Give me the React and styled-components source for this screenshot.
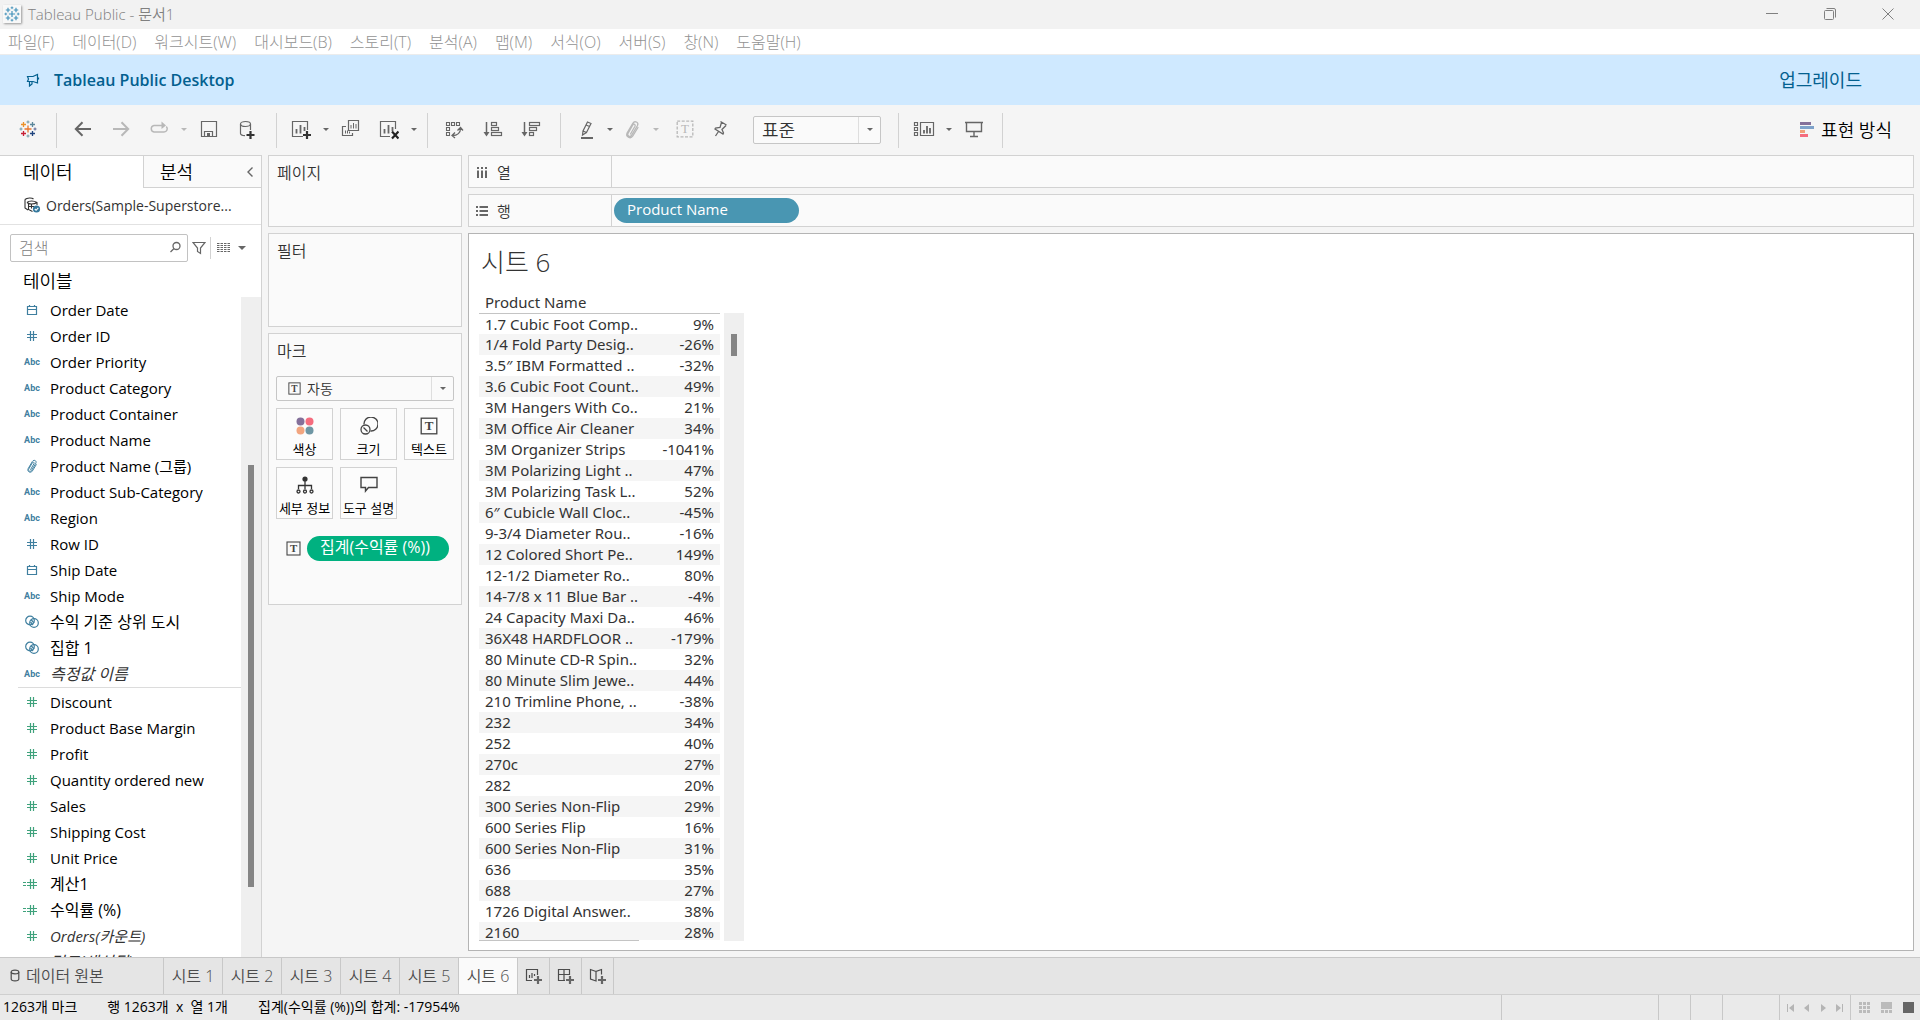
import React from "react";
import styled, { createGlobalStyle, css } from "styled-components";

const c = {
  line: "#d2d2d2",
  strong: "#b4b4b4",
  shell: "#f5f5f5",
  card: "#fafafa",
  icon: "#666666",
  faint: "#b8b8b8",
  dim: "#3f7f9f",
  measure: "#3fa27c",
};

const Global = createGlobalStyle`
  *, *::before, *::after { box-sizing: border-box; }
  body {
    margin: 0;
    font-family: "Open Sans", "Noto Sans CJK KR", sans-serif;
    font-size: 15px;
    color: #000;
    background: ${c.shell};
  }
  button, input, select { font: inherit; color: inherit; margin: 0; }
  button { background: none; border: 0; padding: 0; }
  svg { display: block; flex: none; }
  h1, h2, ul { margin: 0; padding: 0; font-weight: 400; list-style: none; }
`;

/* ---------- shell ---------- */

const Shell = styled.div`
  display: flex;
  flex-direction: column;
  height: 100vh;
  min-width: 1100px;
`;

const TitleBar = styled.header`
  display: flex;
  align-items: center;
  height: 29px;
  padding: 0 0 2px 3px;
  background: #f2f2f2;
  color: #808080;
  font-size: 15px;
  font-weight: 350;
  line-height: 20px;
  flex: none;
`;

const AppBadge = styled.span`
  display: grid;
  place-items: center;
  width: 18px;
  height: 18px;
  margin-right: 7px;
  background: #f8f8f8;
  box-shadow: 1px 1px 2px #999;
`;

const WindowButtons = styled.div`
  display: flex;
  margin-left: auto;
  padding-right: 3px;
`;

const WindowButton = styled.button`
  display: grid;
  place-items: center;
  width: 58px;
  height: 27px;
`;

const MenuBar = styled.nav`
  display: flex;
  gap: 18px;
  align-items: center;
  height: 26px;
  padding-left: 8px;
  background: #fff;
  border-bottom: 1px solid #ececec;
  color: #929292;
  font-size: 16px;
  font-weight: 300;
  line-height: 20px;
  flex: none;
  white-space: nowrap;
`;

const Banner = styled.section`
  display: flex;
  align-items: center;
  height: 50px;
  padding: 0 58px 0 26px;
  background: #cfe9ff;
  color: #03608f;
  flex: none;
`;

const BannerText = styled.span`
  margin-left: 14px;
  font-size: 16px;
  font-weight: 600;
`;

const UpgradeLink = styled.a`
  margin-left: auto;
  color: inherit;
  font-size: 18px;
  line-height: 24px;
  text-decoration: none;
`;

/* ---------- toolbar ---------- */

const Toolbar = styled.div`
  display: flex;
  align-items: center;
  height: 50px;
  padding-right: 28px;
  flex: none;
`;

const ToolGroup = styled.div`
  display: flex;
  align-items: center;
  height: 35px;
  padding: 0 ${(p) => p.$end}px 0 ${(p) => p.$start}px;
  border-right: 1px solid ${c.line};
`;

const ToolButton = styled.button`
  display: flex;
  justify-content: center;
  width: ${(p) => p.$w || 38}px;
  height: 20px;
  color: ${(p) => (p.$off ? c.faint : c.icon)};
`;

const ShowMe = styled.button`
  display: flex;
  align-items: center;
  gap: 7px;
  margin-left: auto;
  font-size: 18px;
  font-weight: 350;
  line-height: 24px;
`;

const Combo = styled.div`
  position: relative;
  width: ${(p) => p.$w};
  height: ${(p) => p.$h}px;
  margin: ${(p) => p.$margin || 0};
  color: #333;
`;

const ComboSelect = styled.select`
  appearance: none;
  width: 100%;
  height: 100%;
  padding: 0 24px 0 ${(p) => p.$pad}px;
  background: ${c.card};
  border: 1px solid #c6c6c6;
  border-radius: 2px;
  font-size: ${(p) => p.$size}px;
  font-weight: 350;
  line-height: 22px;
`;

const ComboArrow = styled.span`
  position: absolute;
  top: 1px;
  bottom: 1px;
  right: 1px;
  width: 22px;
  display: grid;
  place-items: center;
  border-left: 1px solid #dedede;
  color: ${c.icon};
  pointer-events: none;
`;

const ComboIcon = styled.span`
  position: absolute;
  left: 12px;
  top: 6px;
  pointer-events: none;
`;

/* ---------- workspace ---------- */

const Workspace = styled.main`
  display: flex;
  gap: 6px;
  flex: 1;
  min-height: 0;
`;

const DataPane = styled.aside`
  display: flex;
  flex-direction: column;
  width: 262px;
  flex: none;
  background: #fff;
  border-top: 1px solid ${c.line};
  border-right: 1px solid ${c.line};
`;

const PaneTabs = styled.div`
  display: flex;
  height: 32px;
  flex: none;
`;

const PaneTab = styled.button`
  flex: ${(p) => (p.$on ? "0 0 143px" : "1")};
  padding-left: ${(p) => (p.$on ? 23 : 16)}px;
  text-align: left;
  font-size: 18px;
  font-weight: 350;
  line-height: 24px;
  ${(p) =>
    !p.$on &&
    css`
      background: ${c.card};
      border-left: 1px solid ${c.line};
      border-bottom: 1px solid ${c.line};
    `}
`;

const CollapseButton = styled.button`
  display: grid;
  place-items: center;
  width: 22px;
  background: ${c.card};
  border-bottom: 1px solid ${c.line};
`;

const SourceRow = styled.button`
  display: flex;
  align-items: center;
  gap: 5px;
  height: 37px;
  padding: 0 0 2px 24px;
  border-bottom: 1px solid #e2e2e2;
  color: #333;
  font-size: 14px;
  flex: none;
`;

const SearchRow = styled.div`
  display: flex;
  align-items: center;
  gap: 4px;
  height: 28px;
  margin: 9px 0 0 10px;
  flex: none;
  color: ${c.icon};
`;

const SearchBox = styled.label`
  position: relative;
  width: 178px;
  height: 28px;
`;

const SearchInput = styled.input`
  width: 100%;
  height: 100%;
  padding: 0 28px 0 8px;
  border: 1px solid #c2c2c2;
  border-radius: 2px;
  font-size: 16px;
  font-weight: 300;
  &::placeholder { color: #808080; opacity: 1; }
`;

const SearchGlyph = styled.span`
  position: absolute;
  right: 5px;
  top: 7px;
`;

const ViewMenu = styled.button`
  display: flex;
  align-items: center;
  gap: 8px;
  height: 22px;
  padding-left: 6px;
  border-left: 1px solid ${c.line};
`;

const TablesTitle = styled.h2`
  height: 35px;
  padding: 6px 0 0 23px;
  font-size: 18px;
  font-weight: 350;
  line-height: 26px;
  flex: none;
`;

const FieldArea = styled.div`
  display: flex;
  flex: 1;
  min-height: 0;
`;

const FieldList = styled.ul`
  flex: 1;
  overflow: hidden;
`;

const Field = styled.li`
  display: flex;
  align-items: center;
  height: 26px;
  padding-left: 22px;
  font-style: ${(p) => (p.$italic ? "italic" : "normal")};
  color: ${(p) => (p.$italic ? "#333" : "#000")};
  white-space: nowrap;
`;

const FieldGlyph = styled.span`
  display: grid;
  place-items: center;
  width: 20px;
  margin-right: 8px;
  color: ${(p) => p.$color};
  font: 700 9px/12px Roboto, sans-serif;
`;

const FieldName = styled.span`
  line-height: 22px;
  &:lang(ko) { font-size: 16px; }
`;

const FieldRule = styled.li`
  height: 2px;
  margin-left: 18px;
  border-top: 1px solid #dcdcdc;
`;

const ScrollTrack = styled.div`
  width: 20px;
  padding: ${(p) => p.$top}px 0 ${(p) => p.$bottom || 0}px 7px;
  background: #efefef;
`;

const ScrollThumb = styled.div`
  width: 6px;
  height: ${(p) => p.$h};
  background: #858585;
`;

/* ---------- cards ---------- */

const Cards = styled.div`
  display: flex;
  flex-direction: column;
  gap: 6px;
  width: 194px;
  flex: none;
`;

const Card = styled.section`
  min-height: ${(p) => p.$h}px;
  padding: 6px 7px;
  background: ${c.card};
  border: 1px solid ${c.line};
`;

const CardTitle = styled.h2`
  padding-left: 1px;
  color: #333;
  font-size: 16px;
  font-weight: 350;
  line-height: 22px;
`;

const MarkGrid = styled.div`
  display: grid;
  grid-template-columns: 57fr 57fr 50fr;
  gap: 7px;
  margin-top: 7px;
`;

const MarkButton = styled.button`
  display: flex;
  flex-direction: column;
  align-items: center;
  justify-content: space-between;
  height: 52px;
  padding: 8px 0 1px;
  background: #fcfcfc;
  border: 1px solid ${c.line};
  font-size: 13px;
  line-height: 18px;
  white-space: nowrap;
`;

const MarkPillRow = styled.div`
  display: flex;
  align-items: center;
  gap: 6px;
  margin: 17px 5px 0 10px;
`;

const Pill = styled.button`
  width: ${(p) => p.$w};
  height: 25px;
  padding: 0 13px 3px;
  border-radius: 13px;
  background: ${(p) => p.$bg};
  color: #fff;
  text-align: left;
  font-size: ${(p) => p.$size}px;
  line-height: 22px;
  white-space: nowrap;
`;

/* ---------- shelves and view ---------- */

const ViewColumn = styled.div`
  display: flex;
  flex-direction: column;
  gap: 6px;
  flex: 1;
  min-width: 0;
  padding: 0 6px 6px 0;
`;

const Shelf = styled.section`
  display: flex;
  height: 33px;
  background: ${c.card};
  border: 1px solid ${c.line};
  flex: none;
`;

const ShelfLabel = styled.h2`
  display: flex;
  align-items: center;
  gap: 9px;
  width: 143px;
  padding-left: 7px;
  border-right: 1px solid ${c.line};
  color: #333;
  font-size: 15px;
  font-weight: 350;
  line-height: 22px;
`;

const ShelfDrop = styled.div`
  display: flex;
  align-items: center;
  flex: 1;
  padding-left: 2px;
`;

const Sheet = styled.section`
  display: flex;
  flex-direction: column;
  flex: 1;
  min-height: 0;
  padding: 10px 10px 9px;
  background: #fff;
  border: 1px solid ${c.strong};
`;

const SheetTitle = styled.h1`
  padding-left: 2px;
  color: #333;
  font-size: 26px;
  font-weight: 300;
  line-height: 36px;
  flex: none;
`;

const Crosstab = styled.div`
  display: flex;
  gap: 4px;
  flex: 1;
  min-height: 0;
  margin-top: 10px;
`;

const TableFrame = styled.div`
  display: flex;
  flex-direction: column;
  width: 241px;
`;

const TableClip = styled.div`
  flex: 1;
  min-height: 0;
  overflow: hidden;
`;

const FrameRule = styled.div`
  width: 160px;
  height: 1px;
  background: #c4c4c4;
`;

const Table = styled.table`
  width: 100%;
  table-layout: fixed;
  border-collapse: separate;
  border-spacing: 0;
  color: #333;
  font-family: "Noto Sans", sans-serif;
  font-size: 15px;
  line-height: 20px;
  white-space: nowrap;

  th, td { padding: 0 6px 1px; height: 21px; text-align: left; font-weight: 400; }
  thead th { height: 23px; padding-bottom: 0; }
  tbody th { width: 160px; }
  tbody td { text-align: right; }
  tbody tr:nth-child(even) > * { background: #f5f5f5; }
  tbody tr:first-child > * { padding-bottom: 0; border-top: 1px solid #c4c4c4; }
`;

const TableScroll = styled(ScrollTrack)`
  margin-top: 23px;
`;

/* ---------- bottom ---------- */

const SheetTabs = styled.nav`
  display: flex;
  height: 37px;
  background: #e5e5e5;
  border-top: 1px solid #c8c8c8;
  flex: none;
`;

const SheetTab = styled.button`
  display: flex;
  align-items: center;
  justify-content: ${(p) => (p.$start ? "flex-start" : "center")};
  gap: 6px;
  width: ${(p) => p.$w || 59}px;
  padding: 0 0 1px ${(p) => (p.$start ? 10 : 0)}px;
  background: ${(p) => (p.$on ? c.card : "transparent")};
  border-right: 1px solid #c8c8c8;
  color: #4c4c4c;
  font-size: 16px;
  font-weight: 350;
  line-height: 22px;
  white-space: nowrap;
`;

const StatusBar = styled.footer`
  display: flex;
  height: 26px;
  padding-left: 3px;
  background: #eaeaea;
  border-top: 1px solid #cfcfcf;
  font-size: 14px;
  line-height: 24px;
  flex: none;
  white-space: nowrap;
`;

const StatusText = styled.span`
  margin-right: 30px;
`;

const StatusCells = styled.div`
  display: flex;
  margin-left: auto;
`;

const StatusCell = styled.div`
  display: flex;
  align-items: center;
  justify-content: space-between;
  width: ${(p) => p.$w}px;
  padding: 0 ${(p) => p.$pr || 0}px 0 ${(p) => p.$pl || 0}px;
  border-left: 1px solid #c8c8c8;
`;

/* ---------- icons ---------- */

const Svg = ({ w = 20, h = w, children, ...rest }) => (
  <svg width={w} height={h} viewBox={`0 0 ${w} ${h}`} fill="none" stroke="currentColor" aria-hidden="true" {...rest}>
    {children}
  </svg>
);

const logoMarks = [
  [9, 9, 3.5, "#e8762c"],
  [4.5, 4.5, 2.5, "#eb9129"],
  [13.5, 4.5, 2.5, "#5b879b"],
  [4.5, 13.5, 2.5, "#c72035"],
  [13.5, 13.5, 2.5, "#1f447e"],
  [9, 2, 1.5, "#7199a6"],
  [9, 16, 1.5, "#7199a6"],
  [2, 9, 1.5, "#7199a6"],
  [16, 9, 1.5, "#5c6692"],
];

const Logo = ({ mono, size = 18 }) => (
  <svg width={size} height={size} viewBox="0 0 18 18" fill="none" aria-hidden="true">
    {logoMarks.map(([x, y, r, color]) => (
      <path
        key={`${x}-${y}`}
        d={`M${x - r} ${y}H${x + r}M${x} ${y - r}V${y + r}`}
        stroke={mono ? "#3f8fb8" : color}
        strokeWidth={r > 2 ? 1.3 : 1}
      />
    ))}
  </svg>
);

const Caret = ({ w = 6 }) => (
  <svg width={w} height="20" viewBox={`0 0 ${w} 20`} fill="currentColor" aria-hidden="true">
    <path d={`M0 8H${w}L${w / 2} ${8 + w / 2}z`} />
  </svg>
);

const Plus = ({ x, y, color = "#333" }) => (
  <path d={`M${x - 4} ${y}h8M${x} ${y - 4}v8`} stroke={color} strokeWidth="2.2" />
);

const Back = () => <Svg strokeWidth="2"><path d="M18 9H3M9.5 2.2 2.8 9l6.7 6.8" /></Svg>;
const Forward = () => <Svg strokeWidth="2"><path d="M2 9h15M10.5 2.2 17.2 9l-6.700 6.800" /></Svg>;
const Replay = () => (
  <Svg strokeWidth="1.5">
    <path d="M13 5.500H5A3.300 3.300 0 0 0 5 12h10a3.300 3.300 0 0 0 2.300-5.600" />
    <path d="M12.500 1.500 17 5.500l-4.500 3.500z" fill="currentColor" stroke="none" />
  </Svg>
);
const Save = () => (
  <Svg>
    <path d="M2.500 1.500h15v15h-15zM5.500 16.500v-5h8v5" strokeWidth="1.200" />
    <path d="M8 13h3v3H8z" fill="currentColor" stroke="none" />
  </Svg>
);
const AddData = () => (
  <Svg strokeWidth="1.200">
    <ellipse cx="8.500" cy="4" rx="5" ry="2.500" />
    <path d="M3.500 4v9.500c0 1 2 2 4.500 2.200M13.500 4v6" />
    <Plus x={13.5} y={15} />
  </Svg>
);
const chartBars = <path d="M5.500 9v4.500M9.500 5v8.500M13.500 7v4" strokeWidth="1.800" />;
const NewSheet = () => (
  <Svg>
    <path d="M16.500 10V1.500h-15v15H12" strokeWidth="1.200" />
    {chartBars}
    <Plus x={16} y={15} />
  </Svg>
);
const ClearSheet = () => (
  <Svg>
    <path d="M16.500 9V1.500h-15v15H11" strokeWidth="1.200" />
    {chartBars}
    <path d="m13 11.500 6.500 7m0-7-6.500 7" stroke="#222" strokeWidth="2.200" />
  </Svg>
);
const Duplicate = () => (
  <Svg>
    <path d="M7.500.5h10v10h-10zM5 6.500H1.500v9h10V13" strokeWidth="1.200" />
    <path d="M10 5v3.500M12.500 3v5.500M15 4v4.500M4.500 10.500v3M6.500 10.500v3M8.500 11.500v2" />
  </Svg>
);
const Swap = () => (
  <Svg strokeWidth="1.100">
    <path d="M1.500 2.500h3v3h-3zM6.500 2.500h3v3h-3zM11.500 2.500h3v3h-3zM1.500 7.500h3v3h-3zM1.500 12.500h3v3h-3z" />
    <path d="M15.500 8.500c0 4-3 7-8 7M12.500 10.500l3-3 2.500 3M10 12.500l-3 3 3 2.500" strokeWidth="1.300" />
  </Svg>
);
const SortIcon = ({ widths }) => (
  <Svg strokeWidth="1.200">
    <path d="M3.500 2v12" strokeWidth="1.500" />
    <path d="M.5 12h6l-3 4.500z" fill="currentColor" stroke="none" />
    {widths.map((w, i) => (
      <rect key={w} x="8.500" y={2.5 + i * 5} width={w} height="3" />
    ))}
  </Svg>
);
const Pencil = () => (
  <Svg strokeWidth="1.200">
    <path d="m9.500 2 3.500 1.500-4.500 9L5 11zM8 5l3.500 1.500M5 11l-.5 4 4-2.500" />
    <path d="M3 18h12" strokeWidth="2" />
  </Svg>
);
const Clip = ({ size = 20 }) => (
  <svg width={size} height={size} viewBox="0 0 20 20" fill="none" stroke="currentColor" strokeWidth="1.300" strokeLinecap="round" aria-hidden="true">
    <path d="M7.500 14 12 6.200c.9-1.700-1.300-2.900-2.200-1.200L5 13.300c-1.300 2.700 2.200 4.400 3.700 1.900L14.500 5.500c1.500-3.200-2.800-5.300-4.700-2.200L4.200 12.800c-2 4.200 3.500 6.600 5.600 3.200L15 7.500" />
  </svg>
);
const TextMark = ({ size = 18, dashed, color = "#444" }) => (
  <svg width={size} height={size} viewBox="0 0 18 18" fill="none" aria-hidden="true">
    <rect x="1.200" y="1.200" width="15.600" height="15.600" stroke={dashed ? c.faint : color} strokeWidth="1.300" strokeDasharray={dashed ? "3 1.500" : undefined} />
    <text x="9" y="13.300" textAnchor="middle" fontFamily="Liberation Serif, serif" fontSize="13" fontWeight={dashed ? 400 : 700} fill={dashed ? c.faint : color}>T</text>
  </svg>
);
const Pin = () => (
  <Svg strokeWidth="1.300">
    <path d="m9.500 1.500 6 3.500M10.500 2.500 9 7.500l-4.500.5-.5 1 8 5 .5-1L11 9.500l4-4M7.500 11.500 4.500 16" />
  </Svg>
);
const ShowCards = () => (
  <Svg w={22} h={20} strokeWidth="1.200">
    <path d="M1.500 2.500h3v3h-3zM1.500 7.500h3v3h-3zM1.500 12.500h3v3h-3zM7.500 2.500h13v13h-13z" />
    <path d="M11 10v3.500M14 6v7.500M17 8v5.500" strokeWidth="1.800" />
  </Svg>
);
const Present = () => (
  <Svg strokeWidth="1.400">
    <path d="M1 2.500h18M2.500 3v8.500h15V3M10 11.500v5M6 16.500h8" />
  </Svg>
);
const ShowMeIcon = () => (
  <Svg w={15} h={18} stroke="none">
    <path d="M1 1h11v3H1z" fill="#84709a" />
    <path d="M1 5h14v3H1z" fill="#7ea2ca" />
    <path d="M1 9h5v3H1z" fill="#f0a078" />
    <path d="M1 13h8v3H1z" fill="#f56c7e" />
  </Svg>
);
const Horn = () => (
  <Svg w={14} strokeWidth="1.200">
    <path d="M1.500 3.500H7l4.500-2v8.500L7 8.500H1.500l1-2.500zM3.500 8.500v4.500l2.500-2V8.500M12.500 4.500v2" />
  </Svg>
);
const Source = () => (
  <Svg w={17} h={16} strokeWidth="1.100">
    <path d="M1 2.500C3 .5 8 .5 9.500 2M1 2.500v8.500l3 2M3 5.500c2-2 7-2 10 0v2.500M3 5.500c2 2 7 2 10 0M4.500 7v5.500l4 2M5 9.500h5M7.500 7.500v4" />
    <circle cx="12.500" cy="12" r="3.600" fill="#34789c" stroke="none" />
    <path d="m10.800 12 1.300 1.300 2.200-2.500" stroke="#fff" />
  </Svg>
);
const Magnifier = () => <Svg w={14} strokeWidth="1.300"><circle cx="7.500" cy="5" r="3.500" /><path d="M5 7.500 1.500 11" /></Svg>;
const Funnel = () => <Svg w={14} strokeWidth="1.200"><path d="M1 1.500h12L8.500 7v5.500l-3-2V7z" /></Svg>;
const ListView = () => (
  <Svg w={13} h={10} strokeWidth="1">
    <path d="M0 .5h13M0 2.500h13M0 4.500h13M0 6.500h13M0 8.500h13" strokeDasharray="2.500 1" />
  </Svg>
);
const Calendar = () => <Svg w={12} strokeWidth="1.200"><path d="M1.500 2.500h9v8h-9zM1.500 5.500h9M3.500 1v2M8.500 1v2" /></Svg>;
const Hash = ({ calc }) => (
  <Svg w={20} h={12} strokeWidth="1.200">
    <path d="M5 4.500h10M5 7.500h10M8.500 1v10M11.500 1v10" />
    {calc && <path d="M1 4.500h3M1 7.500h3" />}
  </Svg>
);
const Rings = () => (
  <Svg w={14} strokeWidth="1.200">
    <circle cx="5" cy="5.500" r="4.300" />
    <circle cx="9" cy="8" r="4.300" />
    <path d="m6 4.500 3 3.500M5.500 7 8 10" />
  </Svg>
);
const ColorDots = () => (
  <Svg w={18} stroke="none">
    <circle cx="4.500" cy="4.500" r="4" fill="#84709a" />
    <circle cx="13.500" cy="4.500" r="4" fill="#f56c7e" />
    <circle cx="4.500" cy="13.500" r="4" fill="#f2a57f" />
    <circle cx="13.500" cy="13.500" r="4" fill="#6e96a4" />
  </Svg>
);
const SizeIcon = () => (
  <Svg w={18} stroke="#444" strokeWidth="1.300">
    <path d="M4 7.500a7 7 0 1 1 6.500 6.500" />
    <circle cx="5.500" cy="12.500" r="4.500" />
    <path d="m3.500 10.500 4 4" />
  </Svg>
);
const DetailIcon = () => (
  <Svg w={18} stroke="#333" strokeWidth="1.300">
    <circle cx="9" cy="3" r="2.600" fill="#333" stroke="none" />
    <path d="M9 5v8M2.500 13V9.500h13V13" />
    <circle cx="2.500" cy="15.500" r="1.500" /><circle cx="9" cy="15.500" r="1.500" /><circle cx="15.500" cy="15.500" r="1.500" />
  </Svg>
);
const TooltipIcon = () => <Svg w={18} stroke="#444" strokeWidth="1.400"><path d="M1 1.500h16v10H8.500l-3 3.500v-3.500H1z" /></Svg>;
const ColumnsIcon = () => <Svg w={12} strokeWidth="2"><path d="M2 4.500V12M6 4.500V12M10 4.500V12M2 1v2M6 1v2M10 1v2" stroke={c.icon} /></Svg>;
const RowsIcon = () => <Svg w={12} strokeWidth="2"><path d="M3.500 2H12M3.500 6H12M3.500 10H12M0 2h2M0 6h2M0 10h2" stroke={c.icon} /></Svg>;
const Cylinder = () => <Svg w={10} h={13} strokeWidth="1.200"><ellipse cx="5" cy="3" rx="3.800" ry="1.900" /><path d="M1.200 3v7c0 2.500 7.600 2.500 7.600 0V3" /></Svg>;
const AddSheet = () => <Svg w={17}><path d="M12.500 8V2.500h-11v11H7" strokeWidth="1.200" /><path d="M4.500 8v3M7 6v5M9.500 7v2" strokeWidth="1.200" /><Plus x={13} y={13} color="#666" /></Svg>;
const AddDashboard = () => <Svg w={17}><path d="M12.500 8V2.500h-11v11H8M1.500 7.500h11M7 2.500v11" strokeWidth="1.200" /><Plus x={13} y={13} color="#666" /></Svg>;
const AddStory = () => <Svg w={17}><path d="M7 4.500 1.500 2.500v9.500L7 14V4.500l5.500-2v5" strokeWidth="1.200" /><Plus x={13} y={13} color="#666" /></Svg>;

const PageNav = ({ d, bar }) => (
  <Svg w={8} h={8} stroke="none"><path d={d} fill="#b5b5b5" />{bar !== undefined && <path d={`M${bar} 0v8`} stroke="#b5b5b5" />}</Svg>
);
const GridIcon = () => (
  <Svg w={11} stroke="none"><path d="M0 0h3v3H0zM4 0h3v3H4zM8 0h3v3H8zM0 4h3v3H0zM4 4h3v3H4zM8 4h3v3H8zM0 8h3v3H0zM4 8h3v3H4zM8 8h3v3H8z" fill="#bbb" /></Svg>
);
const StripIcon = () => <Svg w={11} stroke="none"><path d="M0 0h11v7H0zM0 8h3v3H0zM4 8h3v3H4zM8 8h3v3H8z" fill="#bbb" /></Svg>;
const FullIcon = () => <Svg w={11} stroke="none"><path d="M0 0h11v11H0z" fill="#666" /></Svg>;

/* ---------- data ---------- */

const menus = ["파일(F)", "데이터(D)", "워크시트(W)", "대시보드(B)", "스토리(T)", "분석(A)", "맵(M)", "서식(O)", "서버(S)", "창(N)", "도움말(H)"];

const glyphs = {
  date: <Calendar />,
  number: <Hash />,
  calc: <Hash calc />,
  text: "Abc",
  group: <Clip size={15} />,
  set: <Rings />,
};

const dimensions = [
  ["date", "Order Date"],
  ["number", "Order ID"],
  ["text", "Order Priority"],
  ["text", "Product Category"],
  ["text", "Product Container"],
  ["text", "Product Name"],
  ["group", "Product Name (그룹)"],
  ["text", "Product Sub-Category"],
  ["text", "Region"],
  ["number", "Row ID"],
  ["date", "Ship Date"],
  ["text", "Ship Mode"],
  ["set", "수익 기준 상위 도시", "ko"],
  ["set", "집합 1", "ko"],
  ["text", "측정값 이름", "ko", true],
];

const measures = [
  ["number", "Discount"],
  ["number", "Product Base Margin"],
  ["number", "Profit"],
  ["number", "Quantity ordered new"],
  ["number", "Sales"],
  ["number", "Shipping Cost"],
  ["number", "Unit Price"],
  ["calc", "계산1", "ko"],
  ["calc", "수익률 (%)", "ko"],
  ["number", "Orders(카운트)", "en", true],
  ["number", "경도(생성됨)", "ko", true],
];

const rows = [
  ["1.7 Cubic Foot Comp..", "9%"],
  ["1/4 Fold Party Desig..", "-26%"],
  ["3.5″ IBM Formatted ..", "-32%"],
  ["3.6 Cubic Foot Count..", "49%"],
  ["3M Hangers With Co..", "21%"],
  ["3M Office Air Cleaner", "34%"],
  ["3M Organizer Strips", "-1041%"],
  ["3M Polarizing Light ..", "47%"],
  ["3M Polarizing Task L..", "52%"],
  ["6″ Cubicle Wall Cloc..", "-45%"],
  ["9-3/4 Diameter Rou..", "-16%"],
  ["12 Colored Short Pe..", "149%"],
  ["12-1/2 Diameter Ro..", "80%"],
  ["14-7/8 x 11 Blue Bar ..", "-4%"],
  ["24 Capacity Maxi Da..", "46%"],
  ["36X48 HARDFLOOR ..", "-179%"],
  ["80 Minute CD-R Spin..", "32%"],
  ["80 Minute Slim Jewe..", "44%"],
  ["210 Trimline Phone, ..", "-38%"],
  ["232", "34%"],
  ["252", "40%"],
  ["270c", "27%"],
  ["282", "20%"],
  ["300 Series Non-Flip", "29%"],
  ["600 Series Flip", "16%"],
  ["600 Series Non-Flip", "31%"],
  ["636", "35%"],
  ["688", "27%"],
  ["1726 Digital Answer..", "38%"],
  ["2160", "28%"],
];

const FieldItem = ({ kind, name, lang = "en", italic, color }) => (
  <Field $italic={italic}>
    <FieldGlyph $color={color}>{glyphs[kind]}</FieldGlyph>
    <FieldName lang={lang}>{name}</FieldName>
  </Field>
);

const Tool = ({ label, w, off, children }) => (
  <ToolButton type="button" aria-label={label} $w={w} $off={off}>{children}</ToolButton>
);

const DropCaret = ({ label, off }) => (
  <Tool label={label} w={12} off={off}><Caret /></Tool>
);

export default function App() {
  return (
    <Shell lang="ko">
      <Global />
      <TitleBar>
        <AppBadge><Logo mono size={16} /></AppBadge>
        <span>Tableau Public - 문서1</span>
        <WindowButtons>
          <WindowButton type="button" aria-label="최소화"><Svg w={12}><path d="M0 5.500h12" /></Svg></WindowButton>
          <WindowButton type="button" aria-label="이전 크기로"><Svg w={12}><rect x=".5" y="2.500" width="9" height="9" rx="1" /><path d="M2.500.5H10a1.500 1.500 0 0 1 1.500 1.500v7.500" /></Svg></WindowButton>
          <WindowButton type="button" aria-label="닫기"><Svg w={12}><path d="m.5.5 11 11m0-11-11 11" /></Svg></WindowButton>
        </WindowButtons>
      </TitleBar>

      <MenuBar aria-label="메뉴">
        {menus.map((m) => <button type="button" key={m}>{m}</button>)}
      </MenuBar>

      <Banner>
        <Horn />
        <BannerText>Tableau Public Desktop</BannerText>
        <UpgradeLink href="#upgrade">업그레이드</UpgradeLink>
      </Banner>

      <Toolbar role="toolbar">
        <ToolGroup $start={9} $end={9}><Tool label="시작 페이지"><Logo /></Tool></ToolGroup>
        <ToolGroup $start={7} $end={10}>
          <Tool label="실행 취소"><Back /></Tool>
          <Tool label="다시 실행" off><Forward /></Tool>
          <Tool label="재생" off><Replay /></Tool>
          <DropCaret label="재생 옵션" off />
          <Tool label="저장"><Save /></Tool>
          <Tool label="새 데이터 원본"><AddData /></Tool>
        </ToolGroup>
        <ToolGroup $start={5} $end={7}>
          <Tool label="새 워크시트"><NewSheet /></Tool>
          <DropCaret label="새로 만들기 옵션" />
          <Tool label="복제"><Duplicate /></Tool>
          <Tool label="지우기"><ClearSheet /></Tool>
          <DropCaret label="지우기 옵션" />
        </ToolGroup>
        <ToolGroup $start={8} $end={10}>
          <Tool label="행과 열 바꾸기"><Swap /></Tool>
          <Tool label="오름차순 정렬"><SortIcon widths={[5, 7, 10]} /></Tool>
          <Tool label="내림차순 정렬"><SortIcon widths={[10, 7, 4]} /></Tool>
        </ToolGroup>
        <ToolGroup $start={11} $end={17}>
          <Tool label="하이라이트" w={32}><Pencil /></Tool>
          <DropCaret label="하이라이트 옵션" />
          <Tool label="그룹" w={34} off><Clip /></Tool>
          <DropCaret label="그룹 옵션" off />
          <Tool label="마크 레이블" w={46} off><TextMark dashed /></Tool>
          <Tool label="축 고정" w={26}><Pin /></Tool>
          <Combo $w="128px" $h={28} $margin="0 0 0 19px">
            <ComboSelect aria-label="맞춤" $pad={8} $size={18} defaultValue="표준"><option>표준</option></ComboSelect>
            <ComboArrow><Caret /></ComboArrow>
          </Combo>
        </ToolGroup>
        <ToolGroup $start={6} $end={9}>
          <Tool label="카드 표시"><ShowCards /></Tool>
          <DropCaret label="카드 옵션" />
          <Tool label="프레젠테이션 모드"><Present /></Tool>
        </ToolGroup>
        <ShowMe type="button"><ShowMeIcon />표현 방식</ShowMe>
      </Toolbar>

      <Workspace>
        <DataPane>
          <PaneTabs role="tablist">
            <PaneTab type="button" role="tab" aria-selected="true" $on>데이터</PaneTab>
            <PaneTab type="button" role="tab" aria-selected="false">분석</PaneTab>
            <CollapseButton type="button" aria-label="접기">
              <Svg w={8} h={12} stroke={c.icon} strokeWidth="1.400"><path d="M6.500 1.500 2 6l4.500 4.500" /></Svg>
            </CollapseButton>
          </PaneTabs>
          <SourceRow type="button"><Source />Orders(Sample-Superstore...</SourceRow>
          <SearchRow>
            <SearchBox>
              <SearchInput type="text" placeholder="검색" aria-label="검색" />
              <SearchGlyph><Magnifier /></SearchGlyph>
            </SearchBox>
            <button type="button" aria-label="필터"><Funnel /></button>
            <ViewMenu type="button" aria-label="보기"><ListView /><Caret w={8} /></ViewMenu>
          </SearchRow>
          <TablesTitle>테이블</TablesTitle>
          <FieldArea>
            <FieldList>
              {dimensions.map(([kind, name, lang, italic]) => (
                <FieldItem key={name} kind={kind} name={name} lang={lang} italic={italic} color={c.dim} />
              ))}
              <FieldRule />
              {measures.map(([kind, name, lang, italic]) => (
                <FieldItem key={name} kind={kind} name={name} lang={lang} italic={italic} color={c.measure} />
              ))}
            </FieldList>
            <ScrollTrack $top={168} $bottom={70}><ScrollThumb $h="100%" /></ScrollTrack>
          </FieldArea>
        </DataPane>

        <Cards>
          <Card $h={72}><CardTitle>페이지</CardTitle></Card>
          <Card $h={94}><CardTitle>필터</CardTitle></Card>
          <Card $h={272}>
            <CardTitle>마크</CardTitle>
            <Combo $w="100%" $h={25} $margin="14px 0 0">
              <ComboSelect aria-label="마크 유형" $pad={30} $size={14} defaultValue="자동"><option>자동</option></ComboSelect>
              <ComboIcon><TextMark size={13} /></ComboIcon>
              <ComboArrow><Caret /></ComboArrow>
            </Combo>
            <MarkGrid>
              <MarkButton type="button"><ColorDots />색상</MarkButton>
              <MarkButton type="button"><SizeIcon />크기</MarkButton>
              <MarkButton type="button"><TextMark />텍스트</MarkButton>
              <MarkButton type="button"><DetailIcon />세부 정보</MarkButton>
              <MarkButton type="button"><TooltipIcon />도구 설명</MarkButton>
            </MarkGrid>
            <MarkPillRow>
              <TextMark size={15} />
              <Pill type="button" $w="100%" $bg="#00b180" $size={16}>집계(수익률 (%))</Pill>
            </MarkPillRow>
          </Card>
        </Cards>

        <ViewColumn>
          <Shelf>
            <ShelfLabel><ColumnsIcon />열</ShelfLabel>
            <ShelfDrop />
          </Shelf>
          <Shelf>
            <ShelfLabel><RowsIcon />행</ShelfLabel>
            <ShelfDrop><Pill type="button" $w="185px" $bg="#4996b2" $size={15}>Product Name</Pill></ShelfDrop>
          </Shelf>
          <Sheet>
            <SheetTitle>시트 6</SheetTitle>
            <Crosstab>
              <TableFrame>
                <TableClip>
                  <Table>
                    <colgroup><col width="160" /><col /></colgroup>
                    <thead><tr><th colSpan="2" scope="col">Product Name</th></tr></thead>
                    <tbody>
                      {rows.map(([name, value]) => (
                        <tr key={name}><th scope="row">{name}</th><td>{value}</td></tr>
                      ))}
                    </tbody>
                  </Table>
                </TableClip>
                <FrameRule />
              </TableFrame>
              <TableScroll $top={21}><ScrollThumb $h="22px" /></TableScroll>
            </Crosstab>
          </Sheet>
        </ViewColumn>
      </Workspace>

      <SheetTabs>
        <SheetTab type="button" $w={164} $start><Cylinder />데이터 원본</SheetTab>
        {[1, 2, 3, 4, 5, 6].map((n) => (
          <SheetTab type="button" key={n} $on={n === 6}>{`시트 ${n}`}</SheetTab>
        ))}
        <SheetTab type="button" $w={32} aria-label="새 워크시트"><AddSheet /></SheetTab>
        <SheetTab type="button" $w={32} aria-label="새 대시보드"><AddDashboard /></SheetTab>
        <SheetTab type="button" $w={32} aria-label="새 스토리"><AddStory /></SheetTab>
      </SheetTabs>

      <StatusBar>
        <StatusText>1263개 마크</StatusText>
        <StatusText>행 1263개 &nbsp;x&nbsp; 열 1개</StatusText>
        <StatusText>집계(수익률 (%))의 합계: -17954%</StatusText>
        <StatusCells>
          <StatusCell $w={157} />
          <StatusCell $w={32} />
          <StatusCell $w={32} />
          <StatusCell $w={57} />
          <StatusCell $w={71} $pl={7} $pr={7}>
            <PageNav d="M7 0v8L2 4z" bar={0.5} />
            <PageNav d="M6 0v8L1 4z" />
            <PageNav d="M2 0v8l5-4z" />
            <PageNav d="M1 0v8l5-4z" bar={7.5} />
          </StatusCell>
          <StatusCell $w={70} $pl={8} $pr={6}><GridIcon /><StripIcon /><FullIcon /></StatusCell>
        </StatusCells>
      </StatusBar>
    </Shell>
  );
}
